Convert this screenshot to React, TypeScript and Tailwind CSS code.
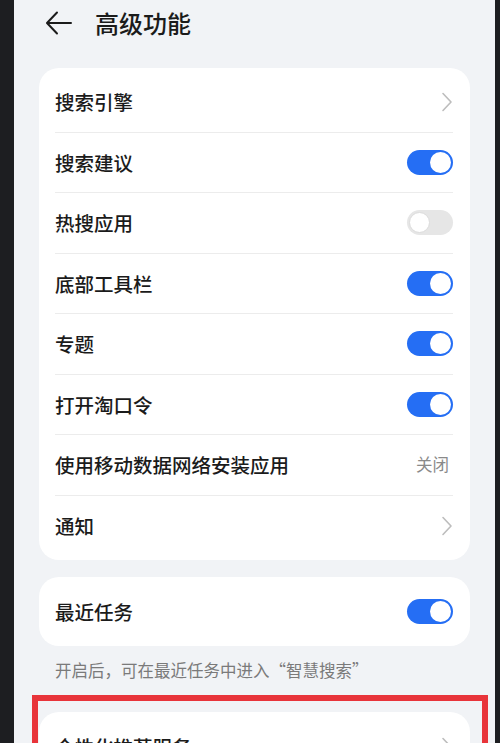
import React from "react"

const font = { fontFamily: '"Noto Sans CJK SC", "Noto Sans", sans-serif' }

type Row = { label: string; kind: "chevron" | "on" | "off" | "text"; value?: string }

const mainRows: Row[] = [
  { label: "搜索引擎", kind: "chevron" },
  { label: "搜索建议", kind: "on" },
  { label: "热搜应用", kind: "off" },
  { label: "底部工具栏", kind: "on" },
  { label: "专题", kind: "on" },
  { label: "打开淘口令", kind: "on" },
  { label: "使用移动数据网络安装应用", kind: "text", value: "关闭" },
  { label: "通知", kind: "chevron" },
]

function Chevron() {
  return (
    <svg width="12" height="20" viewBox="0 0 12 20" fill="none">
      <path d="M2 1.5 L10 10 L2 18.5" stroke="#bdbdbd" strokeWidth="1.6" strokeLinecap="round" strokeLinejoin="round" />
    </svg>
  )
}

function Toggle({ on }: { on: boolean }) {
  if (on) {
    return (
      <div className="flex h-[25px] w-[46px] items-center justify-end rounded-full bg-[#256ef4] px-[2px]">
        <div className="h-[21px] w-[21px] rounded-full bg-white" />
      </div>
    )
  }
  return (
    <div className="flex h-[25px] w-[46px] items-center justify-start rounded-full bg-[#e6e6e6] px-[2px]">
      <div className="h-[21px] w-[21px] rounded-full border border-[#dcdcdc] bg-white" />
    </div>
  )
}

function SettingRow({ row, last }: { row: Row; last: boolean }) {
  return (
    <div className={`flex h-[60.5px] items-center justify-between ${last ? "" : "border-b border-[#ececec]"}`}>
      <span className="text-[19.5px] font-medium text-[#1b1b1b]">{row.label}</span>
      {row.kind === "chevron" && <Chevron />}
      {row.kind === "on" && <Toggle on />}
      {row.kind === "off" && <Toggle on={false} />}
      {row.kind === "text" && <span className="mr-[4px] text-[16.5px] text-[#8a8a8a]">{row.value}</span>}
    </div>
  )
}

export default function App() {
  return (
    <div className="flex h-[743px] w-[500px] overflow-hidden bg-[#1d1e21]" style={font}>
      <div className="w-[14px] shrink-0" />
      <div className="relative flex-1 bg-[#f1f3f6] px-[25px]">
        {/* header */}
        <div className="flex h-[46px] items-center">
          <svg width="28" height="26" viewBox="0 0 28 26" fill="none" className="ml-[6px]">
            <path d="M26 13 H3 M12 2.5 L2 13 L12 23.5" stroke="#1b1b1b" strokeWidth="2" strokeLinecap="round" strokeLinejoin="round" />
          </svg>
          <h1 className="ml-[22px] text-[24px] font-medium text-[#1b1b1b]">高级功能</h1>
        </div>

        <div className="mt-[22px] rounded-[20px] bg-white py-[4px] pl-[16px] pr-[17px]">
          {mainRows.map((r, i) => (
            <SettingRow key={r.label} row={r} last={i === mainRows.length - 1} />
          ))}
        </div>

        <div className="mt-[17px] rounded-[20px] bg-white py-[4px] pl-[16px] pr-[17px]">
          <SettingRow row={{ label: "最近任务", kind: "on" }} last />
        </div>

        <p className="mt-[12px] pl-[16px] text-[16.5px] text-[#7a7a7a]">开启后，可在最近任务中进入“智慧搜索”</p>

        <div className="mt-[30px] rounded-[20px] bg-white py-[4px] pl-[16px] pr-[17px]">
          <SettingRow row={{ label: "个性化推荐服务", kind: "chevron" }} last />
        </div>

        {/* annotation box */}
        <div className="absolute left-[18px] top-[695px] h-[80px] w-[456px] border-[6px] border-[#e8343a]" />
      </div>
      <div className="w-[5px] shrink-0" />
    </div>
  )
}
